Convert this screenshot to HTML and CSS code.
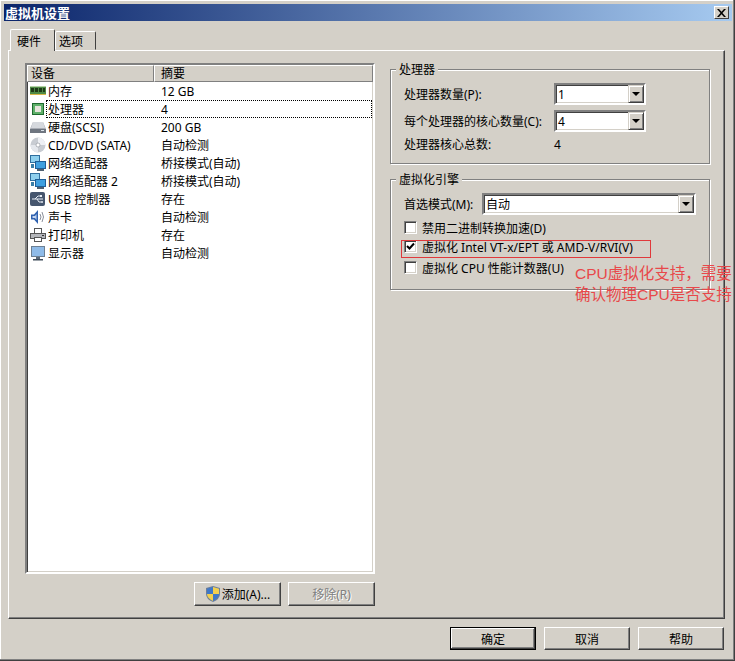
FILE: index.html
```html
<!DOCTYPE html>
<html lang="zh-CN">
<head>
<meta charset="utf-8">
<title>虚拟机设置</title>
<link rel="stylesheet" href="styles.css">
</head>
<body>
<div class="window">
  <div class="titlebar">
    <span class="title">虚拟机设置</span>
    <button class="close" aria-label="关闭"><svg width="9" height="8" viewBox="0 0 9 8"><path d="M0 0h2l2.500 2.800L7 0h2L5.500 4 9 8H7L4.500 5.200 2 8H0l3.500-4z" fill="#000"/></svg></button>
  </div>
  <div class="tabs">
    <div class="tab active">硬件</div>
    <div class="tab">选项</div>
  </div>
  <div class="panel">
    <div class="left">
      <div class="list">
        <div class="list-head">
          <div class="head-cell first">设备</div>
          <div class="head-cell second">摘要</div>
        </div>
        <div class="row">
          <svg class="icon" viewBox="0 0 16 16"><rect x="0" y="3" width="16" height="9" fill="#4f8a45"/><rect x="0" y="3" width="16" height="1" fill="#b4d2a4"/><rect x="1" y="5" width="3" height="4" fill="#1e3a18"/><rect x="5" y="5" width="3" height="4" fill="#1e3a18"/><rect x="9" y="5" width="3" height="4" fill="#1e3a18"/><rect x="13" y="5" width="2" height="4" fill="#1e3a18"/><rect x="0" y="11" width="16" height="1" fill="#d8b84a"/></svg>
          <div class="cells"><span class="name">内存</span><span>12 GB</span></div>
        </div>
        <div class="row">
          <svg class="icon" viewBox="0 0 16 16"><rect x="2.500" y="2.500" width="11" height="11" fill="#5fb06a" stroke="#1d6a2e"/><rect x="5" y="5" width="6" height="6" fill="#e6e4dc"/></svg>
          <div class="cells selected"><span class="name">处理器</span><span>4</span></div>
        </div>
        <div class="row">
          <svg class="icon" viewBox="0 0 16 16"><path d="M3 3h10l3 7v4H0v-4z" fill="#a8acb4"/><path d="M3 3h10l2 6H1z" fill="#d6d9de"/><rect x="0" y="10" width="16" height="4" fill="#6f7680"/><rect x="11" y="11" width="3" height="1" fill="#d8e0e8"/></svg>
          <div class="cells"><span class="name">硬盘(SCSI)</span><span>200 GB</span></div>
        </div>
        <div class="row">
          <svg class="icon" viewBox="0 0 16 16"><circle cx="8" cy="8" r="7.500" fill="#c8ccd2"/><path d="M8 .5A7.500 7.500 0 0 1 15.500 8H10a2 2 0 0 0-2-2z" fill="#eef0f4"/><path d="M8 15.500A7.500 7.500 0 0 1 .5 8H6a2 2 0 0 0 2 2z" fill="#e4e7ec"/><circle cx="8" cy="8" r="2" fill="#fff" stroke="#8c9198" stroke-width=".6"/></svg>
          <div class="cells"><span class="name">CD/DVD (SATA)</span><span>自动检测</span></div>
        </div>
        <div class="row">
          <svg class="icon" viewBox="0 0 16 16"><rect x="0" y="0" width="10" height="8" fill="#2f6f9f"/><rect x="1" y="1" width="8" height="6" fill="#8fd0ee"/><rect x="5" y="6" width="11" height="8" fill="#1f5f98"/><rect x="6" y="7" width="9" height="6" fill="#3fa0e0"/><rect x="7" y="14" width="7" height="2" fill="#4f5f70"/><rect x="1" y="9" width="3" height="4" fill="#3a7fa8"/></svg>
          <div class="cells"><span class="name">网络适配器</span><span>桥接模式(自动)</span></div>
        </div>
        <div class="row">
          <svg class="icon" viewBox="0 0 16 16"><rect x="0" y="0" width="10" height="8" fill="#2f6f9f"/><rect x="1" y="1" width="8" height="6" fill="#8fd0ee"/><rect x="5" y="6" width="11" height="8" fill="#1f5f98"/><rect x="6" y="7" width="9" height="6" fill="#3fa0e0"/><rect x="7" y="14" width="7" height="2" fill="#4f5f70"/><rect x="1" y="9" width="3" height="4" fill="#3a7fa8"/></svg>
          <div class="cells"><span class="name">网络适配器 2</span><span>桥接模式(自动)</span></div>
        </div>
        <div class="row">
          <svg class="icon" viewBox="0 0 16 16"><rect x="0" y="1" width="15" height="14" rx="2" fill="#46566e"/><path d="M2 8h11M5 8l3-3h2M7 8l2 3h2" stroke="#e8eef6" fill="none"/><rect x="10" y="4" width="2" height="2" fill="#e8eef6"/><circle cx="12" cy="11" r="1" fill="#e8eef6"/></svg>
          <div class="cells"><span class="name">USB 控制器</span><span>存在</span></div>
        </div>
        <div class="row">
          <svg class="icon" viewBox="0 0 16 16"><path d="M1 5.500h3L8 1v14l-4-4.500H1z" fill="#2f62b0"/><path d="M2.500 7H5l1.500-2v6L5 9H2.500z" fill="#c4d4ee"/><path d="M10 5q2 3 0 6M12 3q3 5 0 10" stroke="#8a8f9a" fill="none"/></svg>
          <div class="cells"><span class="name">声卡</span><span>自动检测</span></div>
        </div>
        <div class="row">
          <svg class="icon" viewBox="0 0 16 16"><rect x="4.500" y="1.500" width="7" height="5" fill="#fff" stroke="#555"/><rect x="0.500" y="6.500" width="15" height="5" fill="#b4b6ba" stroke="#555"/><rect x="4.500" y="10.500" width="7" height="4" fill="#fff" stroke="#555"/><rect x="12" y="8" width="2" height="1" fill="#333"/></svg>
          <div class="cells"><span class="name">打印机</span><span>存在</span></div>
        </div>
        <div class="row">
          <svg class="icon" viewBox="0 0 16 16"><rect x="1" y="1" width="14" height="11" fill="#6d7f92"/><rect x="2" y="2" width="12" height="9" fill="#8fbbe8"/><rect x="6" y="12" width="4" height="2" fill="#5a6878"/><rect x="3" y="14" width="10" height="1.500" fill="#3f4c5a"/></svg>
          <div class="cells"><span class="name">显示器</span><span>自动检测</span></div>
        </div>
      </div>
      <div class="list-actions">
        <button class="btn">
          <svg class="shield" viewBox="0 0 16 16"><path d="M8 0l7 2v6q0 5-7 8-7-3-7-8V2z" fill="#6d7f9a"/><path d="M8 1v7H2V2.800z" fill="#3f78c8"/><path d="M8 8h6q0 4-6 7z" fill="#3f78c8"/><path d="M8 1l6 1.800V8H8z" fill="#f2d050"/><path d="M8 8v7q-6-3-6-7z" fill="#f2d050"/></svg>添加(A)...
        </button>
        <button class="btn" disabled>移除(R)</button>
      </div>
    </div>
    <div class="right">
      <div class="group group-cpu">
        <span class="legend">处理器</span>
        <div class="field"><span class="label label-wide">处理器数量(P):</span><div class="combo combo-small"><span>1</span><span class="arrow"></span></div></div>
        <div class="field"><span class="label label-wide">每个处理器的核心数量(C):</span><div class="combo combo-small"><span>4</span><span class="arrow"></span></div></div>
        <div class="field field-text"><span class="label label-wide">处理器核心总数:</span><span>4</span></div>
      </div>
      <div class="group group-virt">
        <span class="legend">虚拟化引擎</span>
        <div class="field"><span class="label label-narrow">首选模式(M):</span><div class="combo combo-wide"><span>自动</span><span class="arrow"></span></div></div>
        <div class="check"><span class="box"></span>禁用二进制转换加速(D)</div>
        <div class="check"><span class="box"><svg width="9" height="9" viewBox="0 0 9 9"><path d="M1 4l2.500 2.500L8 1.500" fill="none" stroke="#000" stroke-width="2"/></svg></span>虚拟化 Intel VT-x/EPT 或 AMD-V/RVI(V)</div>
        <div class="check check-last"><span class="box"></span>虚拟化 CPU 性能计数器(U)</div>
      </div>
    </div>
  </div>
  <div class="footer">
    <button class="btn btn-main default">确定</button>
    <button class="btn btn-main">取消</button>
    <button class="btn btn-main">帮助</button>
  </div>
  <div class="note-box"></div>
  <div class="note-text">CPU虚拟化支持，需要<br>确认物理CPU是否支持</div>
</div>
</body>
</html>
```

FILE: styles.css
```css
* { box-sizing: border-box; }
html, body { margin: 0; padding: 0; }
body {
  width: 735px;
  height: 661px;
  overflow: hidden;
  font-family: "Noto Sans", "Noto Sans CJK SC", sans-serif;
  font-size: 12px;
  color: #000;
  background: #d4d0c8;
}
.window {
  position: relative;
  width: 735px;
  height: 661px;
  display: flex;
  flex-direction: column;
  background: #d4d0c8;
  border-right: 1px solid #404040;
  border-bottom: 1px solid #404040;
  box-shadow: inset -1px -1px 0 #808080, inset 1px 1px 0 #fff;
}
.titlebar {
  margin: 4px 2px 0 4px;
  height: 17px;
  flex: none;
  display: flex;
  align-items: center;
  justify-content: space-between;
  padding: 0 3px 0 1px;
  background: linear-gradient(90deg, #0a246a, #a6caf0);
}
.title { color: #fff; font-weight: 700; font-size: 13px; line-height: 17px; font-family: "Noto Sans CJK SC", sans-serif; }
.close {
  width: 15px;
  height: 13px;
  padding: 0;
  display: flex;
  align-items: center;
  justify-content: center;
  background: #d4d0c8;
  border: 1px solid;
  border-color: #fff #404040 #404040 #fff;
}
.tabs {
  flex: none;
  display: flex;
  align-items: flex-end;
  height: 29px;
  padding-left: 10px;
  position: relative;
  z-index: 1;
}
.tab {
  width: 41px;
  height: 19px;
  padding-left: 3px;
  display: flex;
  align-items: center;
  background: #d4d0c8;
  border: 1px solid;
  border-color: #fff #404040 transparent #fff;
  border-radius: 2px 2px 0 0;
}
.tab.active {
  width: 45px;
  height: 22px;
  padding-left: 6px;
  margin-bottom: -1px;
  border-bottom: 0;
}
.panel {
  flex: none;
  display: flex;
  align-items: flex-start;
  margin: 0 10px 0 8px;
  width: 717px;
  height: 569px;
  padding: 12px 0 0 16px;
  border: 1px solid;
  border-color: #fff #404040 #404040 #fff;
  box-shadow: inset -1px -1px 0 #808080;
}
.left { width: 350px; flex: none; }
.list {
  height: 511px;
  background: #fff;
  border: 2px solid;
  border-color: #808080 #fff #fff #808080;
  box-shadow: inset 1px 1px 0 #404040, inset -1px -1px 0 #d4d0c8;
}
.list-head { display: flex; height: 17px; }
.head-cell {
  height: 17px;
  background: #d4d0c8;
  padding-left: 3px;
  line-height: 15px;
  border: 1px solid;
  border-color: #fff #808080 #808080 #fff;
}
.first { width: 127px; }
.second { flex: 1; padding-left: 6px; }
.row { display: flex; align-items: center; height: 18px; padding-left: 3px; }
.icon { width: 16px; height: 16px; flex: none; }
.cells {
  flex: 1;
  display: flex;
  align-items: center;
  height: 18px;
  margin-right: 1px;
  white-space: nowrap;
  border: 1px dotted transparent;
}
.cells.selected { border-color: #000; }
.name { width: 114px; padding-left: 1px; flex: none; }
.list-actions { display: flex; justify-content: flex-end; gap: 7px; margin-top: 8px; }
.btn {
  width: 87px;
  height: 24px;
  padding: 0;
  display: flex;
  align-items: center;
  justify-content: center;
  font: inherit;
  color: #000;
  background: #d4d0c8;
  border: 1px solid;
  border-color: #fff #404040 #404040 #fff;
  box-shadow: inset -1px -1px 0 #808080;
}
.btn:disabled { color: #808080; text-shadow: 1px 1px 0 #fff; }
.shield { width: 16px; height: 16px; margin-right: 1px; flex: none; }
.right { width: 320px; flex: none; margin: 6px 0 0 15px; }
.group {
  position: relative;
  border: 1px solid #808080;
  box-shadow: 1px 1px 0 #fff, inset 1px 1px 0 #fff;
  padding: 13px 0 0 13px;
}
.group-cpu { height: 95px; }
.group-virt { height: 111px; margin-top: 15px; }
.legend {
  position: absolute;
  left: 5px;
  top: -8px;
  padding: 0 3px;
  height: 15px;
  line-height: 15px;
  background: #d4d0c8;
}
.field { display: flex; align-items: center; height: 22px; margin-bottom: 5px; white-space: nowrap; }
.field-text { height: 14px; margin: 0; }
.label { flex: none; }
.label-wide { width: 150px; }
.label-narrow { width: 78px; }
.combo {
  height: 22px;
  display: flex;
  align-items: center;
  justify-content: space-between;
  padding-left: 2px;
  background: #fff;
  border: 2px solid;
  border-color: #808080 #fff #fff #808080;
  box-shadow: inset 1px 1px 0 #404040, inset -1px -1px 0 #d4d0c8;
}
.combo-small { width: 92px; }
.combo-wide { width: 214px; }
.arrow {
  position: relative;
  width: 16px;
  height: 18px;
  background: #d4d0c8;
  border: 1px solid;
  border-color: #d4d0c8 #404040 #404040 #d4d0c8;
  box-shadow: inset 1px 1px 0 #fff, inset -1px -1px 0 #808080;
}
.arrow::after {
  content: "";
  position: absolute;
  left: 3px;
  top: 6px;
  border: 4px solid transparent;
  border-top-color: #000;
  border-bottom: 0;
}
.check { display: flex; align-items: center; height: 19px; white-space: nowrap; }
.group-virt .field { margin-bottom: 3px; }
.check-last { margin-top: 2px; }
.box {
  width: 13px;
  height: 13px;
  margin-right: 5px;
  flex: none;
  display: flex;
  align-items: center;
  justify-content: center;
  background: #fff;
  border: 1px solid;
  border-color: #808080 #fff #fff #808080;
  box-shadow: inset 1px 1px 0 #404040, inset -1px -1px 0 #d4d0c8;
}
.footer {
  flex: none;
  display: flex;
  justify-content: flex-end;
  gap: 8px;
  padding: 8px 10px 0 0;
}
.btn-main { width: 86px; height: 23px; }
.default { border: 1px solid #000; box-shadow: inset -1px -1px 0 #404040, inset 1px 1px 0 #fff, inset -2px -2px 0 #808080; }
.note-box {
  position: absolute;
  left: 401px;
  top: 240px;
  width: 250px;
  height: 18px;
  border: 1px solid #e0393b;
}
.note-text {
  position: absolute;
  left: 575px;
  top: 263px;
  width: 160px;
  font-family: "Liberation Sans", "Noto Sans CJK SC", sans-serif;
  font-size: 15.500px;
  line-height: 21px;
  white-space: nowrap;
  color: #e8484a;
}
```
